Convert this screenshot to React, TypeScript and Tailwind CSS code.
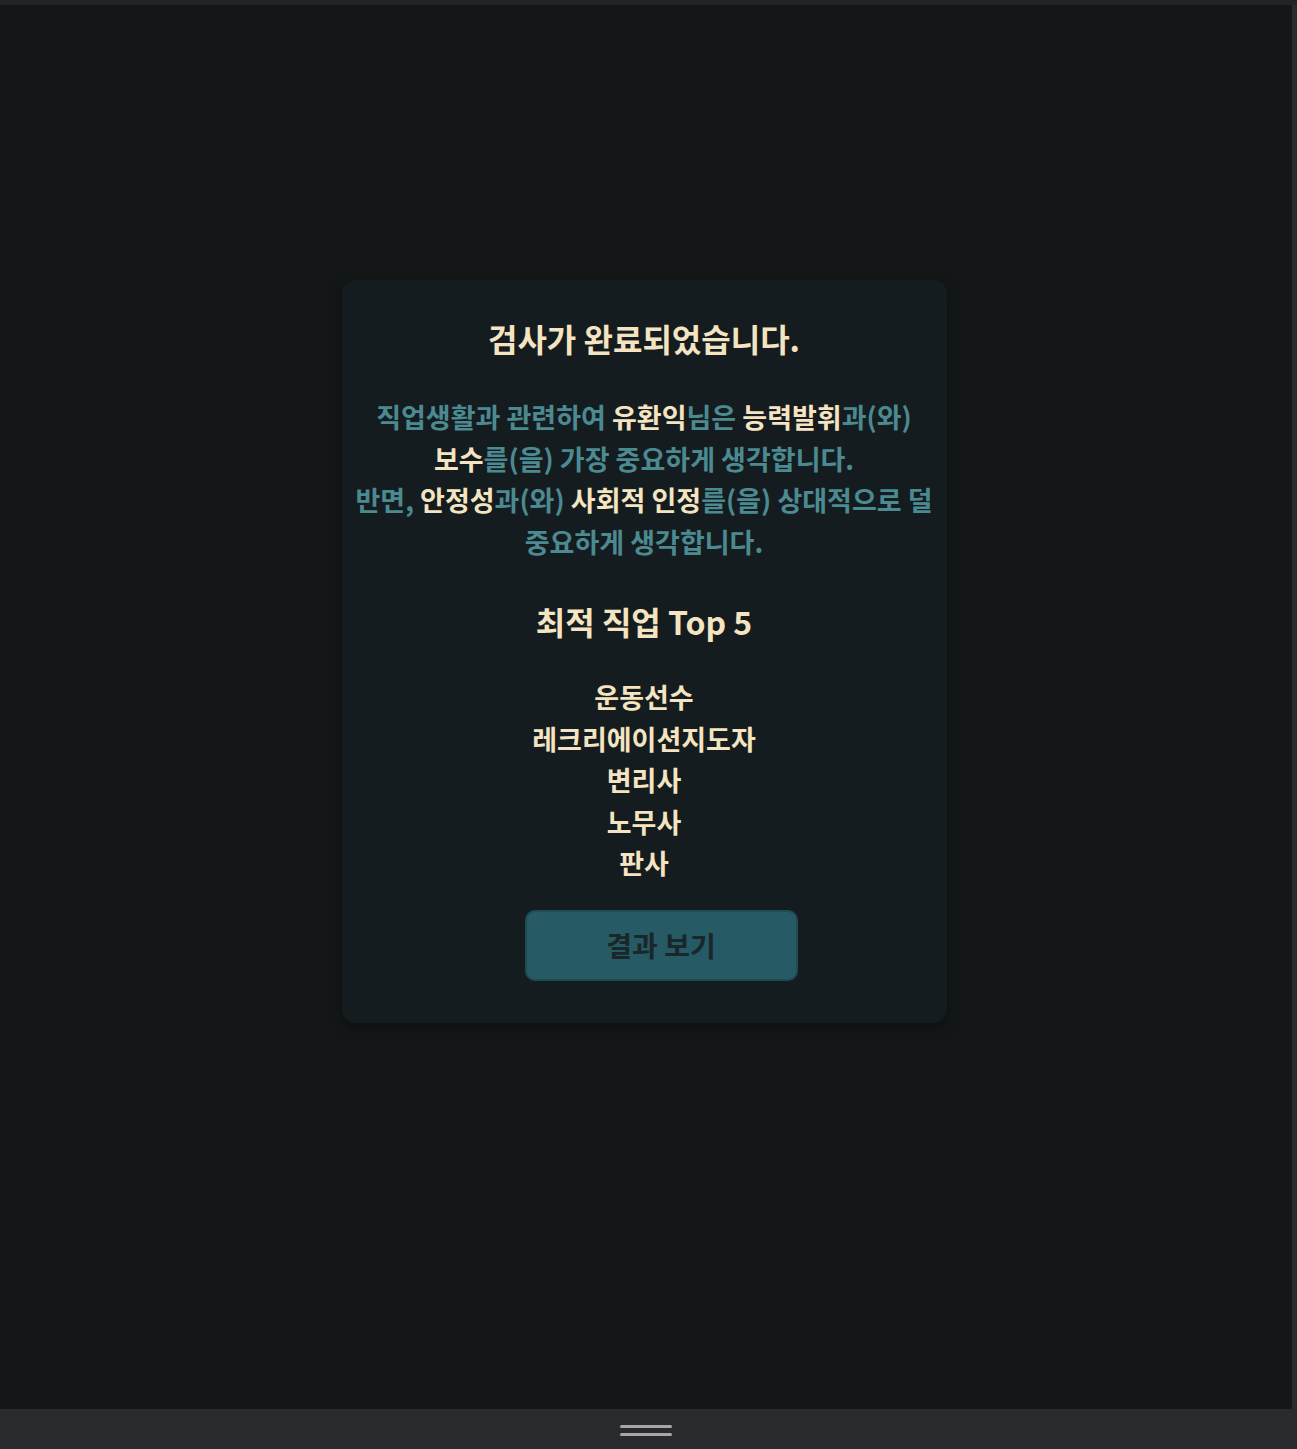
import React from "react";

const jobs = ["운동선수", "레크리에이션지도자", "변리사", "노무사", "판사"];

const Hl: React.FC<{ children: React.ReactNode }> = ({ children }) => (
  <span className="font-bold text-[#f4e4c1]">{children}</span>
);

const App: React.FC = () => {
  return (
    <div
      className="flex h-[1449px] w-full flex-col bg-[#131718]"
      style={{ fontFamily: '"Noto Sans CJK KR", "Noto Sans", sans-serif' }}
    >
      <div className="h-[5px] w-full bg-[#232427]" />
      <div className="flex flex-1">
        <div className="flex flex-1 justify-center pr-[4px]">
          <div className="mt-[275px] h-fit w-[605px] rounded-[14px] bg-[#151c1f] px-3 pb-[42px] pt-[34px] text-center shadow-[0_4px_14px_rgba(0,0,0,0.35)]">
            <h1 className="text-[32px] font-bold leading-[48px] text-[#f4e4c1]">
              검사가 완료되었습니다.
            </h1>
            <div className="mt-[34px] whitespace-nowrap text-[27px] font-semibold leading-[41.5px] text-[#4b8a91]">
              <div>
                직업생활과 관련하여 <Hl>유환익</Hl>님은 <Hl>능력발휘</Hl>과(와)
              </div>
              <div>
                <Hl>보수</Hl>를(을) 가장 중요하게 생각합니다.
              </div>
              <div>
                반면, <Hl>안정성</Hl>과(와) <Hl>사회적 인정</Hl>를(을) 상대적으로 덜
              </div>
              <div>중요하게 생각합니다.</div>
            </div>
            <h2 className="mt-[39px] text-[32px] font-bold leading-[40px] text-[#f4e4c1]">
              최적 직업 Top 5
            </h2>
            <ul className="mt-[35px] text-[27px] font-bold leading-[41.5px] text-[#f4e4c1]">
              {jobs.map((job) => (
                <li key={job}>{job}</li>
              ))}
            </ul>
            <div className="mt-[26px] flex justify-center pl-[34px]">
              <button className="h-[71px] w-[273px] rounded-[10px] border-2 border-[#1f4b53] bg-[#265a64] text-[28px] font-bold text-[#19262a]">
                결과 보기
              </button>
            </div>
          </div>
        </div>
        <div className="w-[5px] bg-[#2a2b2f]" />
      </div>
      <div className="flex h-[40px] w-full flex-col items-center justify-center gap-[5px] bg-[#292a2e] pr-[5px] pt-[3px]">
        <div className="h-[3px] w-[52px] rounded-full bg-[#a6a6a6]" />
        <div className="h-[3px] w-[52px] rounded-full bg-[#a6a6a6]" />
      </div>
    </div>
  );
};

export default App;
